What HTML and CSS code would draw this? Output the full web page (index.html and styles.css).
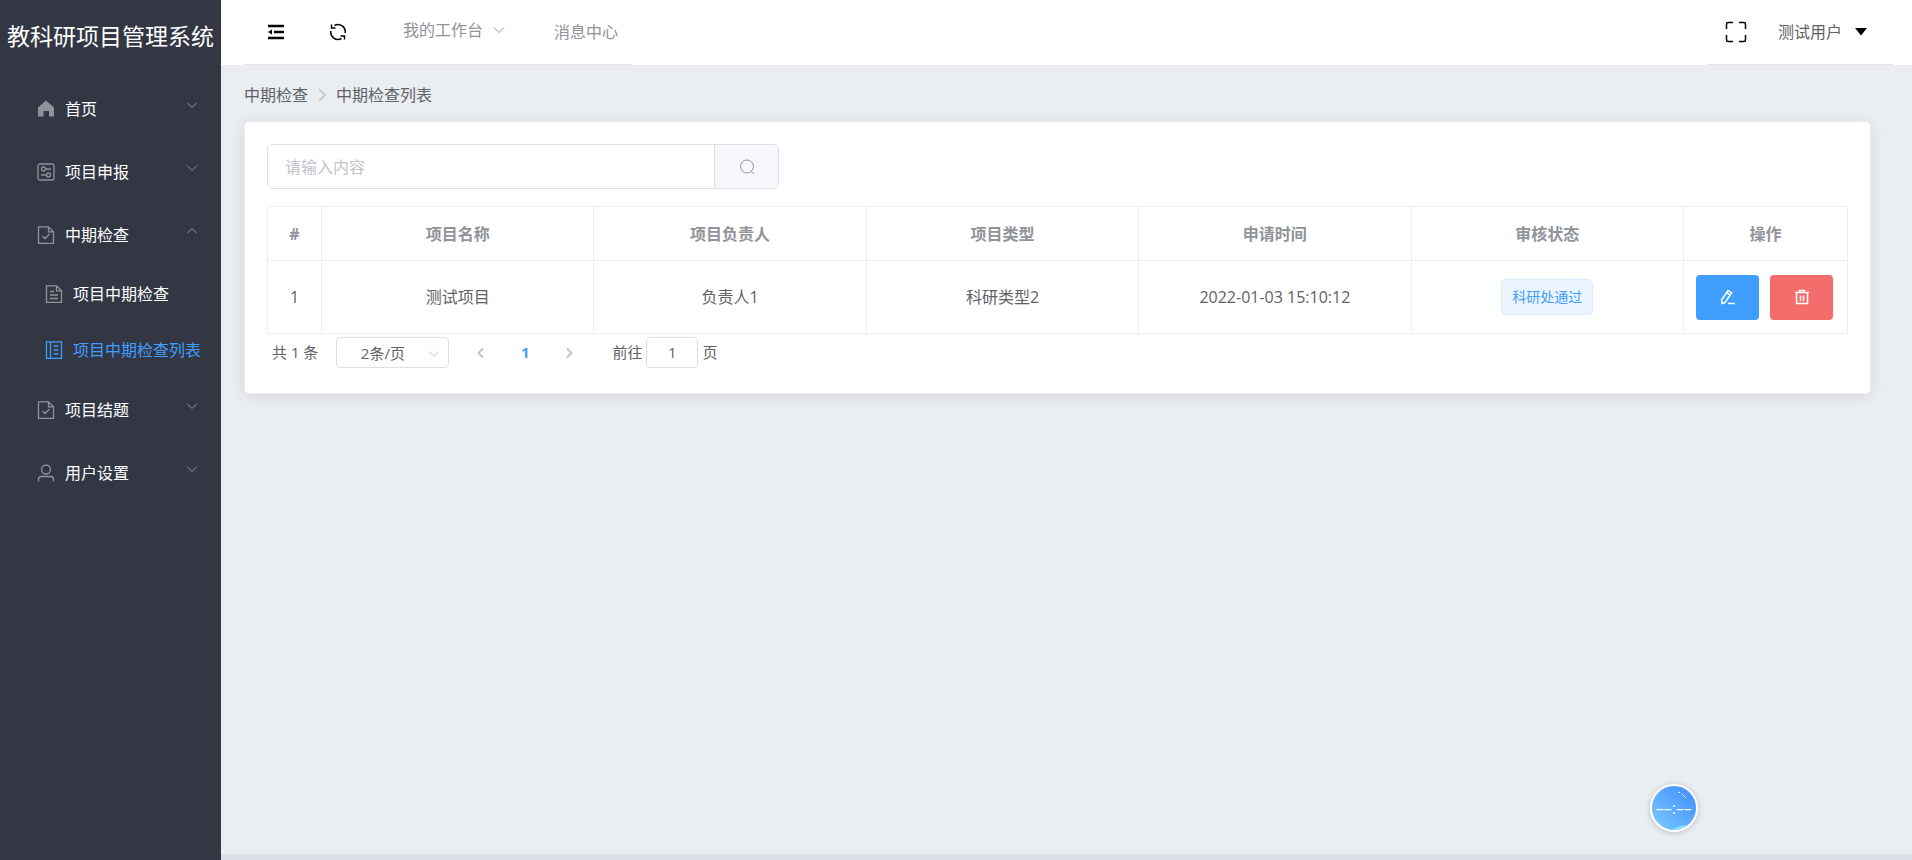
FILE: index.html
```html
<!DOCTYPE html>
<html lang="zh-CN">
<head>
<meta charset="utf-8">
<title>教科研项目管理系统</title>
<link rel="stylesheet" href="styles.css">
</head>
<body>
<svg class="defs" aria-hidden="true">
  <symbol id="down" viewBox="0 0 12 12"><path d="M1 3.500l5 5 5-5"/></symbol>
  <symbol id="up" viewBox="0 0 12 12"><path d="M1 8.500l5-5 5 5"/></symbol>
  <symbol id="doc-checked" viewBox="0 0 18 18"><path d="M1.500 .8h10l5 5v11.500h-15zM11.500 .8v5h5M5.500 10l2.500 2.500 4.500-4.500"/></symbol>
</svg>
<div class="app">
  <aside class="sidebar">
    <h1 class="brand">教科研项目管理系统</h1>
    <nav>
      <ul class="menu">
        <li><button class="menu-item" type="button">
          <svg class="icon solid" viewBox="0 0 18 18"><path d="M9 .5l8 7v9h-5v-5.500H6.500v5.500H1v-9z"/></svg>
          <span>首页</span><svg class="chevron"><use href="#down"/></svg></button></li>
        <li><button class="menu-item" type="button">
          <svg class="icon" viewBox="0 0 18 18"><rect x="1" y="1" width="16" height="16" rx="2"/><circle cx="6.500" cy="6" r="2"/><path d="M8.500 6H14M4 12h5.500"/><circle cx="11.500" cy="12" r="2"/></svg>
          <span>项目申报</span><svg class="chevron"><use href="#down"/></svg></button></li>
        <li><button class="menu-item" type="button" aria-expanded="true">
          <svg class="icon"><use href="#doc-checked"/></svg>
          <span>中期检查</span><svg class="chevron"><use href="#up"/></svg></button>
          <ul class="submenu">
            <li><a class="menu-item" href="#check">
              <svg class="icon" viewBox="0 0 18 18"><path d="M1.500 .8h10l5 5v11.500h-15zM11.500 .8v5h5M5 6.500h4M5 10h8M5 13.500h8"/></svg>
              <span>项目中期检查</span></a></li>
            <li><a class="menu-item active" href="#list" aria-current="page">
              <svg class="icon" viewBox="0 0 18 18"><path d="M1.500 .8h15v16.500h-15zM5.500 .8v16.500M8.500 5h5M8.500 9h5M8.500 13h5"/></svg>
              <span>项目中期检查列表</span></a></li>
          </ul></li>
        <li><button class="menu-item" type="button">
          <svg class="icon"><use href="#doc-checked"/></svg>
          <span>项目结题</span><svg class="chevron"><use href="#down"/></svg></button></li>
        <li><button class="menu-item" type="button">
          <svg class="icon" viewBox="0 0 18 18"><circle cx="9" cy="5.500" r="4.500"/><path d="M1.500 17.500v-2q0-3 3-3h9q3 0 3 3v2"/></svg>
          <span>用户设置</span><svg class="chevron"><use href="#down"/></svg></button></li>
      </ul>
    </nav>
  </aside>
  <div class="page">
    <header class="topbar">
      <nav class="top-left">
        <button class="tool" type="button" aria-label="折叠菜单"><svg class="icon fold" viewBox="0 0 18 18"><path d="M1 3h16M7 9h10M1 15h16"/><path class="fill" d="M1 9l4-2.500v5z"/></svg></button>
        <button class="tool" type="button" aria-label="刷新"><svg class="icon refresh" viewBox="0 0 18 18"><path d="M5.500 2.500A7.300 7.300 0 0 1 16.200 10M12.500 15.500A7.300 7.300 0 0 1 1.800 8M2.500 1.500v3.500h4M15.500 16.500V13h-4"/></svg></button>
        <button class="workbench" type="button">我的工作台<svg class="chevron"><use href="#down"/></svg></button>
        <a class="messages" href="#messages">消息中心</a>
      </nav>
      <div class="top-right">
        <button class="tool" type="button" aria-label="全屏"><svg class="fullscreen" viewBox="0 0 22 22"><path d="M1.500 8V3q0-1.500 1.500-1.500h5M14 1.500h5q1.500 0 1.500 1.500v5M20.500 14v5q0 1.500-1.500 1.500h-5M8 20.500H3q-1.500 0-1.500-1.500v-5"/></svg></button>
        <button class="user" type="button">测试用户<svg class="caret" viewBox="0 0 12 8"><path d="M0 0h12L6 7.500z"/></svg></button>
      </div>
    </header>
    <main class="content">
      <nav class="breadcrumb" aria-label="面包屑"><a href="#mid">中期检查</a><svg viewBox="0 0 14 14"><path d="M4 1l6 6-6 6"/></svg><span>中期检查列表</span></nav>
      <section class="card">
        <form class="search">
          <input type="text" placeholder="请输入内容" aria-label="搜索内容">
          <button type="button" aria-label="搜索"><svg viewBox="0 0 16 16"><circle cx="8" cy="7.500" r="6.500"/><path d="M12 12l3 3"/></svg></button>
        </form>
        <table class="grid">
          <colgroup><col class="col-index"><col><col><col><col><col><col class="col-actions"></colgroup>
          <thead><tr><th>#</th><th>项目名称</th><th>项目负责人</th><th>项目类型</th><th>申请时间</th><th>审核状态</th><th>操作</th></tr></thead>
          <tbody><tr><td>1</td><td>测试项目</td><td>负责人1</td><td>科研类型2</td><td>2022-01-03 15:10:12</td><td><span class="tag">科研处通过</span></td>
            <td><div class="actions">
              <button class="btn primary" type="button" aria-label="编辑"><svg viewBox="0 0 16 16"><path d="M2 14.500L1.500 11 8 1.500l3.500 2.500L5 13.500zM6.500 3.500L10 6M8 14.500h7"/></svg></button>
              <button class="btn danger" type="button" aria-label="删除"><svg viewBox="0 0 16 16"><path d="M1 3.500h14M5.500 3.500v-2h5v2M2.500 3.500v11h11v-11M6.500 6.500v5.500M9.500 6.500v5.500"/></svg></button>
            </div></td></tr></tbody>
        </table>
        <div class="pagination">
          <span>共 1 条</span>
          <span class="size"><select aria-label="每页条数"><option>2条/页</option></select><svg class="chevron"><use href="#down"/></svg></span>
          <div class="pager">
            <button type="button" disabled aria-label="上一页"><svg viewBox="0 0 12 12"><path d="M8 1.500L3.500 6 8 10.500"/></svg></button>
            <button class="current" type="button">1</button>
            <button type="button" disabled aria-label="下一页"><svg viewBox="0 0 12 12"><path d="M4 1.500L8.500 6 4 10.500"/></svg></button>
          </div>
          <label class="jump">前往<input type="text" value="1">页</label>
        </div>
      </section>
    </main>
    <div class="track"></div>
  </div>
</div>
<div class="clock"><svg viewBox="0 0 44 44" aria-hidden="true"><path class="glint" d="M26 6l3 1M30 8l4 4"/><path class="wave" d="M20 44q8-6 18-4l-6 4z"/></svg><span>––:––</span></div>
</body>
</html>
```

FILE: styles.css
```css
* { box-sizing: border-box; }

body {
  margin: 0;
  font: 16px/24px "Open Sans", "Noto Sans CJK SC", sans-serif;
  color: #606266;
}

button, input, select { font: inherit; color: inherit; }
button { padding: 0; border: 0; background: none; cursor: pointer; }
a { color: inherit; text-decoration: none; }
ul { margin: 0; padding: 0; list-style: none; }
svg { flex: none; fill: none; stroke: currentColor; }
.defs { display: none; }
.app { display: flex; min-height: 100vh; }

.sidebar { flex: none; width: 221px; background: #333744; color: #fff; }
.brand {
  margin: 0;
  padding-top: 19px;
  height: 77px;
  font-size: 23px;
  line-height: 34px;
  font-weight: 400;
  text-align: center;
  white-space: nowrap;
}
.menu-item {
  display: flex;
  align-items: center;
  gap: 10px;
  width: 100%;
  height: 63px;
  padding: 0 23px 0 37px;
  text-align: left;
  white-space: nowrap;
}
.submenu .menu-item { height: 56px; padding: 0 0 0 45px; }
.icon { width: 18px; height: 18px; color: #909399; }
.sidebar .icon { stroke-width: 1.300; }
.sidebar .solid { fill: #909399; stroke: none; }
.active, .sidebar .active .icon { color: #409eff; }
.chevron { width: 12px; height: 12px; color: #909399; }
.menu-item .chevron { margin: 0 0 8px auto; }

.page { flex: 1; min-width: 0; display: flex; flex-direction: column; background: #eaedf1; }
.topbar {
  display: flex;
  justify-content: space-between;
  height: 65px;
  padding: 0 18px 0 23px;
  background: #fff;
}
.top-left, .top-right {
  display: flex;
  align-items: center;
  border-bottom: 1px solid #e6e6e6;
}
.top-left { padding: 0 14px 0 23px; color: #909399; }
.top-right { padding: 0 27px 0 18px; gap: 31px; }
.tool { display: flex; color: #000; }
.tool .icon { color: #000; }
.tool + .tool { margin-left: 44px; }
.fold { stroke-width: 2.500; }
.fold .fill { fill: #000; stroke: none; }
.refresh { stroke-width: 1.500; }
.workbench { display: flex; align-items: center; gap: 10px; margin: 0 49px 4px 56px; }
.fullscreen { width: 22px; height: 22px; stroke-width: 1.500; }
.user { display: flex; align-items: center; gap: 13px; }
.caret { width: 12px; height: 8px; fill: #000; stroke: none; }

.content { flex: 1; padding: 18px 41px 0 23px; }
.breadcrumb { display: flex; align-items: center; gap: 7px; margin-bottom: 14px; }
.breadcrumb svg { width: 14px; height: 14px; color: #c0c4cc; stroke-width: 1.500; }
.card {
  padding: 22px;
  border: 1px solid #ebeef5;
  border-radius: 5px;
  background: #fff;
  box-shadow: 0 2px 14px rgba(0, 0, 0, .1);
}
.search {
  display: flex;
  max-width: 512px;
  height: 45px;
  border: 1px solid #dcdfe6;
  border-radius: 5px;
  overflow: hidden;
}
.search input { flex: 1; min-width: 0; padding: 0 17px; border: 0; background: #fff; outline: 0; }
.search input::placeholder { color: #c0c4cc; }
.search button {
  display: flex;
  align-items: center;
  justify-content: center;
  width: 64px;
  border-left: 1px solid #dcdfe6;
  background: #f5f7fa;
  color: #909399;
}
.search svg { width: 16px; height: 16px; }

.grid {
  width: 100%;
  margin-top: 17px;
  border-collapse: collapse;
  table-layout: fixed;
  text-align: center;
}
.col-index { width: 54px; }
.col-actions { width: 164px; }
.grid th, .grid td { padding: 0; border: 1px solid #ebeef5; }
.grid th { height: 54px; font-weight: 700; color: #909399; }
.grid td { height: 73px; }
.tag {
  display: inline-block;
  padding: 0 10px;
  border: 1px solid #d9ecff;
  border-radius: 5px;
  background: #ecf5ff;
  color: #409eff;
  font-size: 14px;
  line-height: 34px;
}
.actions { display: flex; justify-content: center; gap: 11px; padding-right: 2px; }
.btn {
  display: flex;
  align-items: center;
  justify-content: center;
  width: 63px;
  height: 45px;
  border-radius: 4px;
  color: #fff;
}
.btn svg { width: 16px; height: 16px; stroke-width: 1.500; }
.primary { background: #409eff; }
.danger { background: #f56c6c; }

.pagination {
  display: flex;
  align-items: center;
  margin-bottom: 3px;
  padding: 3px 5px 0;
  font-size: 15px;
  line-height: 31px;
}
.size { position: relative; margin-left: 18px; }
.size select {
  display: block;
  width: 113px;
  height: 31px;
  padding: 0 20px 0 0;
  border: 1px solid #dcdfe6;
  border-radius: 4px;
  background: #fff;
  appearance: none;
  text-align-last: center;
}
.size .chevron { position: absolute; right: 9px; top: 11px; color: #c0c4cc; pointer-events: none; }
.pager { display: flex; margin-left: 10px; }
.pager button { display: flex; align-items: center; justify-content: center; width: 44px; height: 31px; }
.pager svg { width: 12px; height: 12px; color: #c0c4cc; stroke-width: 2; }
.pager .current { color: #409eff; font-weight: 700; }
.jump { display: flex; gap: 4px; margin-left: 21px; }
.jump input {
  width: 52px;
  height: 31px;
  padding: 0;
  border: 1px solid #dcdfe6;
  border-radius: 4px;
  text-align: center;
}
.track { height: 6px; background: #dcdfe6; }

.clock {
  position: fixed;
  right: 214px;
  bottom: 28px;
  display: grid;
  place-items: center;
  width: 48px;
  height: 48px;
  border: 2px solid #fff;
  border-radius: 50%;
  background: linear-gradient(45deg, #7ccbff, #3d8bff);
  box-shadow: 0 1px 6px rgba(0, 0, 0, .2);
  color: #fff;
  overflow: hidden;
}
.clock svg, .clock span { grid-area: 1 / 1; }
.clock svg { width: 44px; height: 44px; }
.glint { stroke: #fff; stroke-dasharray: 2 1; }
.wave { fill: #8be3ff; stroke: none; }
```
